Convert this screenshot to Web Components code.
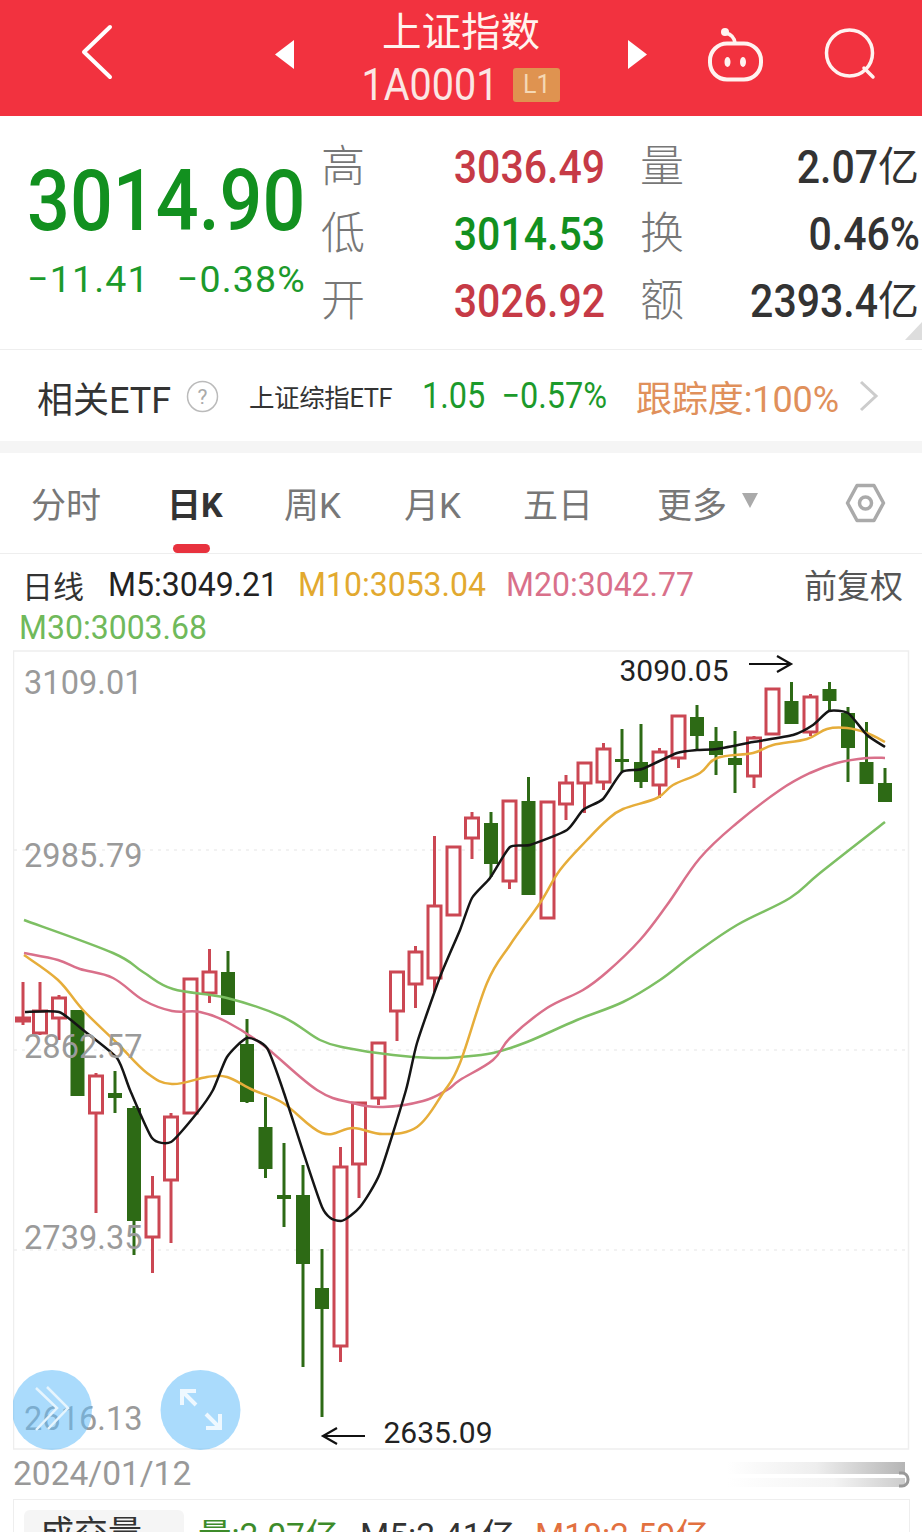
<!DOCTYPE html>
<html lang="zh"><head><meta charset="utf-8"><title>上证指数</title>
<style>
html,body{margin:0;padding:0;background:#fff}
body{width:922px;height:1532px;overflow:hidden;font-family:Roboto,"Noto Sans CJK SC",sans-serif;color:#333}
</style></head><body>
<app-header></app-header>
<quote-panel></quote-panel>
<etf-row></etf-row>
<section-gap></section-gap>
<period-tabs>
  <tab-item>分时</tab-item><tab-item active>日K</tab-item><tab-item>周K</tab-item><tab-item>月K</tab-item><tab-item>五日</tab-item><tab-item caret>更多</tab-item>
</period-tabs>
<ma-legend></ma-legend>
<kline-chart></kline-chart>
<date-row>2024/01/12</date-row>
<volume-row></volume-row>
<script>
const FONT='Roboto,"Noto Sans CJK SC",sans-serif';
function def(name,html,init){
  customElements.define(name,class extends HTMLElement{
    constructor(){super();const r=this.attachShadow({mode:'open'});r.innerHTML=html;if(init)init(r,this);}
  });
}
def('app-header',`<style>
:host{display:flex;position:relative;height:116px;background:#f2323f;color:#fff;justify-content:center;font-family:${FONT}}
.mid{display:flex;flex-direction:column;align-items:center;padding-top:11px}
.t{font-size:39.5px;line-height:44px;color:#fff3ee}
.code{display:flex;align-items:center;gap:15px;margin-top:13px;height:34px}
.c{font-size:39.5px;line-height:34px;display:inline-block;transform:scaleY(1.12);color:#fbe6e4}
.b{width:47px;height:34px;background:#df9350;border-radius:3px;color:#f5d8b4;font-size:25px;line-height:34px;text-align:center}
svg.a{position:absolute;left:0;top:0}
</style>
<svg class="a" width="922" height="116" viewBox="0 0 922 116" fill="none" stroke="#fff">
<path d="M110 27 84 52 110 77" stroke-width="4" stroke-linecap="round" stroke-linejoin="round"/>
<path d="M294 40 275 54.500 294 69Z" fill="#fff" stroke="none"/>
<path d="M628 40 647 54.500 628 69Z" fill="#fff" stroke="none"/>
<rect x="710" y="43.500" width="51" height="36" rx="17" stroke="#fff3f0" stroke-width="4"/>
<path d="M726 33q8 2 9 10" stroke="#fff3f0" stroke-width="3.500"/>
<circle cx="725" cy="32" r="4" fill="#fff3f0" stroke="none"/>
<ellipse cx="727.500" cy="62" rx="3" ry="5" fill="#fff3f0" stroke="none"/><ellipse cx="743" cy="62" rx="3" ry="5" fill="#fff3f0" stroke="none"/>
<circle cx="849.500" cy="53" r="23" stroke="#fff3f0" stroke-width="3.500"/>
<path d="M864 68 873 77" stroke="#fff3f0" stroke-width="3.500" stroke-linecap="round"/>
</svg>
<div class="mid"><div class="t">上证指数</div><div class="code"><span class="c">1A0001</span><span class="b">L1</span></div></div>`);

const stat=(l,v,c,u)=>`<div class="l">${l}</div><div class="v" style="color:${c}"><span class="n">${v}</span>${u?`<span class="u">${u}</span>`:''}</div>`;
def('quote-panel',`<style>
:host{display:grid;position:relative;grid-template-columns:321px 1fr;height:233px;font-family:${FONT};overflow:hidden}
.left{padding:44px 0 0 27px}
.p{font-size:75.500px;line-height:80px;font-weight:500;color:#12901f;display:block;transform:scaleY(1.14);transform-origin:left center;white-space:nowrap}
.d{display:flex;margin-top:19px;width:279px;justify-content:space-between;font-size:37.500px;line-height:40px;color:#1c9a2b;letter-spacing:1.200px;margin-left:0}
.g{display:grid;grid-template-columns:44px 240px 35px 44px 236px;grid-auto-rows:67px;padding-top:18px}
.l{font-size:44px;line-height:67px;color:#777;font-weight:300}
.v{text-align:right;font-size:41px;line-height:67px;font-weight:500;white-space:nowrap}
.n{display:inline-block;transform:scaleY(1.12)}
.u{font-weight:400;letter-spacing:1px}
.gap{width:35px}
.c{position:absolute;right:0;bottom:9px;width:0;height:0;border-left:17px solid transparent;border-bottom:18px solid #ddd}
</style>
<div class="left"><span class="p">3014.90</span><div class="d"><span>−11.41</span><span>−0.38%</span></div></div>
<div class="g">
${stat('高','3036.49','#c63a46')}<i class="gap"></i>${stat('量','2.07','#333','亿')}
${stat('低','3014.53','#12901f')}<i class="gap"></i>${stat('换','0.46%','#333')}
${stat('开','3026.92','#c63a46')}<i class="gap"></i>${stat('额','2393.4','#333','亿')}
</div><div class="c"></div>`);

def('etf-row',`<style>
:host{display:grid;grid-template-columns:212px 173px 214px 223px 1fr;align-items:center;box-sizing:border-box;height:92px;padding-left:37px;border-top:1px solid #eee;font-family:${FONT};white-space:nowrap}
.a{font-size:36px;color:#333;display:flex;align-items:center;gap:15px;padding-top:2px}
.b{font-size:25.500px;color:#333;letter-spacing:-.4px;padding-top:0}
.c{font-size:32.500px;color:#1c9a2b;display:flex;gap:16px;transform:scaleY(1.12)}
.o{font-size:36px;color:#e0905b;letter-spacing:-.1px}
svg{display:block}
</style>
<div class="a"><span>相关ETF</span><svg width="33" height="33" viewBox="0 0 33 33" fill="none"><circle cx="16.500" cy="16.500" r="15" stroke="#bbb" stroke-width="1.500"/><text x="16.500" y="24" font-size="21" text-anchor="middle" fill="#aaa" font-family="Roboto">?</text></svg></div>
<div class="b">上证综指ETF</div>
<div class="c"><span>1.05</span><span>−0.57%</span></div>
<div class="o">跟踪度:100%</div>
<svg width="20" height="32" viewBox="0 0 20 32" fill="none"><path d="M2 2 17 16 2 30" stroke="#ccc" stroke-width="3"/></svg>`);

def('section-gap',`<style>:host{display:block;height:12px;background:#f5f5f5}</style>`);

def('period-tabs',`<style>
:host{display:grid;position:relative;grid-template-columns:136px 117px 120px 119px 134px 186px 40px;align-items:center;box-sizing:border-box;height:101px;padding:0 0 0 31px;border-bottom:1px solid #eee;font-family:${FONT}}
svg{display:block;margin:0 0 0 2px}
</style><slot></slot>
<svg width="41" height="40" viewBox="0 0 41 40" fill="none"><path d="M12 2.500H29L38.500 20 29 37.500H12L2.500 20Z" stroke="#aaa" stroke-width="3.500" stroke-linejoin="round"/><circle cx="20.500" cy="20" r="6" stroke="#aaa" stroke-width="3.500"/></svg>`);

customElements.define('tab-item',class extends HTMLElement{
  constructor(){super();const r=this.attachShadow({mode:'open'});
    r.innerHTML=`<style>
    :host{display:flex;align-items:center;height:98px;margin-bottom:2px;font-size:35px;color:#777;position:relative;white-space:nowrap}
    :host([active]){color:#333;font-weight:700;font-size:34px}
    .bar{position:absolute;left:6px;bottom:-2px;width:37px;height:9px;border-radius:5px;background:#e8323e}
    .caret{margin-left:15px;width:0;height:0;border-left:8.500px solid transparent;border-right:8.500px solid transparent;border-top:15px solid #aaa;margin-top:-4px}
    </style><slot></slot>${this.hasAttribute('active')?'<i class="bar"></i>':''}${this.hasAttribute('caret')?'<i class="caret"></i>':''}`;
  }
});

def('ma-legend',`<style>
:host{display:block;box-sizing:border-box;height:96px;padding-top:9px;font-family:${FONT};white-space:nowrap}
.r{display:flex;align-items:center;height:42px;font-size:32px}
.r1{padding-left:22px}
.r2{padding-left:19px;height:43px}
.m{display:inline-block;transform:scaleY(1.06)}
.x{margin-left:auto;margin-right:19px;font-size:33px;color:#555}
</style>
<div class="r r1"><span style="color:#333;font-size:31px;width:86px">日线</span><span class="m" style="color:#222;width:190px">M5:3049.21</span><span class="m" style="color:#e2a92f;width:208px">M10:3053.04</span><span class="m" style="color:#d9708a">M20:3042.77</span><span class="x">前复权</span></div>
<div class="r r2"><span class="m" style="color:#70b95b">M30:3003.68</span></div>`);

const candles=[
[23,'r',982,1025,1018,1021],[40,'r',982,1035,1011,1033],[59,'r',995,1040,998,1018],[77.500,'g',1010,1096,1010,1096],
[96,'r',1073,1213,1076,1113],[115,'g',1071,1113,1093,1098],[134,'g',1106,1255,1108,1221],[152.500,'r',1176,1273,1197,1237],
[171,'r',1113,1243,1117,1180],[190.500,'r',979,1113,979,1113],[209.500,'r',949,1003,972,993],[228,'g',951,1015,972,1015],
[247,'g',1019,1103,1044,1102],[265.500,'g',1097,1178,1127,1169],[284,'g',1143,1227,1195,1199],[303,'g',1165,1367,1195,1264],
[322,'g',1249,1417,1288,1309],[340.500,'r',1147,1362,1167,1346],[359,'r',1103,1198,1103,1164],[378.500,'r',1042,1105,1043,1098],
[397,'r',972,1041,972,1011],[415.500,'r',946,1008,952,984],[434.500,'r',836,992,906,978],[453.500,'r',847,915,847,915],
[472,'r',812,859,818,838],[491,'g',812,877,823,864],[509.500,'r',801,889,801,881],[528.500,'g',777,895,801,895],
[547.500,'r',802,918,802,918],[566,'r',775,820,783,804],[584.500,'r',762,813,763,783],[603.500,'r',743,790,749,782],
[622,'g',729,772,759,762],[641,'g',724,788,762,782],[659.500,'r',748,798,752,785],[678.500,'r',716,768,716,758],
[697,'g',705,750,717,736],[716,'g',727,775,741,755],[735,'g',731,793,758,765],[754,'r',736,788,738,776],
[772.500,'r',689,734,689,734],[791.500,'g',682,724,701,724],[810.500,'r',694,736,697,732],[829.500,'g',682,710,689,701],
[848,'g',707,782,713,748],[866.500,'g',722,784,762,784],[885,'g',768,802,783,802]];
const M5=[[25,1012],[59,1012],[83,1030],[117,1058],[130,1090],[152,1138],[171,1142],[197,1113],[213,1090],[227,1057],[247,1038],[267,1048],[283,1090],[322,1207],[341,1221],[360,1207],[380,1173],[406,1090],[417,1043],[440,977],[460,930],[472,898],[490,878],[510,847],[530,845],[567,830],[583,810],[603,799],[622,772],[642,769],[677,753],[697,750],[717,749],[753,742],[793,735],[813,725],[829,711],[848,713],[867,735],[885,747]];
const M10=[[24,955],[58,980],[83,1010],[117,1043],[147,1073],[172,1084],[207,1077],[227,1077],[253,1090],[283,1103],[322,1133],[353,1128],[383,1134],[417,1127],[443,1093],[460,1063],[487,983],[510,945],[540,903],[560,870],[587,840],[607,820],[623,809],[657,798],[673,785],[700,773],[717,758],[753,753],[773,745],[807,739],[827,729],[847,728],[867,733],[885,742]];
const M20=[[24,953],[58,960],[80,969],[113,978],[143,1000],[172,1011],[200,1012],[227,1022],[263,1045],[317,1090],[353,1103],[383,1107],[423,1101],[447,1090],[460,1080],[493,1060],[510,1038],[547,1008],[583,990],[607,972],[640,940],[667,905],[700,858],[737,823],[780,790],[810,773],[837,763],[867,758],[885,758]];
const M30=[[24,920],[113,953],[143,972],[173,989],[227,998],[283,1017],[320,1040],[347,1048],[393,1055],[433,1058],[460,1057],[493,1053],[527,1042],[577,1020],[623,1002],[660,980],[693,955],[737,925],[790,898],[820,873],[885,822]];
function smooth(p,k){let d=`M${p[0][0]} ${p[0][1]}`;for(let i=0;i<p.length-1;i++){const a=p[Math.max(0,i-1)],b=p[i],c=p[i+1],e=p[Math.min(p.length-1,i+2)];
 d+=`C${(b[0]+(c[0]-a[0])*k).toFixed(1)} ${(b[1]+(c[1]-a[1])*k).toFixed(1)} ${(c[0]-(e[0]-b[0])*k).toFixed(1)} ${(c[1]-(e[1]-b[1])*k).toFixed(1)} ${c[0]} ${c[1]}`;}return d;}
function candleSvg(){return candles.map(([x,t,wt,wb,bt,bb])=>{
  const col=t==='r'?'#cb4753':'#2d6a15';
  if(t==='r')return `<path d="M${x} ${wt}V${bt}M${x} ${bb}V${wb}" stroke="${col}" stroke-width="3"/><rect x="${x-6.500}" y="${bt}" width="13" height="${bb-bt}" fill="#fff" fill-opacity="${bb-bt>6?1:0}" stroke="${col}" stroke-width="3"/>`;
  return `<path d="M${x} ${wt}V${wb}" stroke="${col}" stroke-width="3"/><rect x="${x-7}" y="${bt}" width="14" height="${bb-bt}" fill="${col}"/>`;
}).join('');}
def('kline-chart',`<style>
:host{display:block;position:relative;box-sizing:border-box;width:897px;height:800px;margin-left:13px;font-family:${FONT}}
svg{position:absolute;left:0;top:0;display:block}
.y{position:absolute;left:11px;font-size:32.500px;line-height:40px;color:#9a9a9a;letter-spacing:.05px}
.n{position:absolute;font-size:30px;line-height:36px;color:#222}
</style>
<svg width="897" height="800" viewBox="13 650 897 800" fill="none">
<rect x="13.500" y="651" width="895" height="798" stroke="#eee" stroke-width="1.500"/>
<path d="M14 850H908M14 1050H908M14 1250H908" stroke="#eee" stroke-width="1.500" stroke-dasharray="3 5"/>
${candleSvg()}
<path d="${smooth(M30,.18)}" stroke="#7dbf63" stroke-width="2.500"/>
<path d="${smooth(M20,.18)}" stroke="#d9708a" stroke-width="2.500"/>
<path d="${smooth(M10,.18)}" stroke="#e6ad3a" stroke-width="2.500"/>
<path d="${smooth(M5,.1)}" stroke="#151515" stroke-width="2.500"/>
<path d="M749 664H790M777 656 791 664 777 672" stroke="#111" stroke-width="2.200"/>
<path d="M365 1436H324M337 1428 323 1436 337 1444" stroke="#111" stroke-width="2.200"/>
</svg>
<span class="y" style="top:13px">3109.01</span>
<span class="y" style="top:186px">2985.79</span>
<span class="y" style="top:377px">2862.57</span>
<span class="y" style="top:568px">2739.35</span>
<span class="y" style="top:749px">2616.13</span>
<span class="n" style="left:606.500px;top:3px">3090.05</span>
<span class="n" style="left:370.500px;top:765px">2635.09</span>
<svg width="897" height="800" viewBox="13 650 897 800" fill="none">
<circle cx="52" cy="1410" r="40" fill="#64bef9" fill-opacity=".55"/><circle cx="200.500" cy="1410" r="40" fill="#64bef9" fill-opacity=".55"/>
<path d="M36 1388 57 1408 36 1430M47 1387 68 1408 48 1429" stroke="#e6f5fe" stroke-width="2.500"/>
<path d="M182 1405V1391H196M183 1392 196 1405M220 1414V1428H206M219 1427 206 1414" stroke="#eef8ff" stroke-width="4"/>
</svg>`);

def('date-row',`<style>
:host{display:block;position:relative;box-sizing:border-box;height:49px;padding:4px 0 0 13px;font-family:${FONT};font-size:33.500px;line-height:40px;color:#999}
.s1,.s2{position:absolute;right:17px;width:178px}
.s1{top:12px;height:12px;background:linear-gradient(90deg,#fff,#eee 50%,#b5b5b5)}
.s2{top:28px;height:9px;background:linear-gradient(90deg,#fff,#f4f4f4 60%,#ccc)}
svg{position:absolute;left:898px;top:8px}
</style><slot></slot><i class="s1"></i><i class="s2"></i>
<svg width="12" height="30" viewBox="0 0 12 30" fill="none"><path d="M1 15h3a6 6 0 0 1 6 6v1a6 6 0 0 1-6 6H1" stroke="#999" stroke-width="3"/></svg>`);

def('volume-row',`<style>
:host{display:flex;position:relative;box-sizing:border-box;width:897px;margin-left:13px;height:33px;border:solid #eee;border-width:1.500px 1.500px 0;font-family:${FONT};overflow:hidden;white-space:nowrap;font-size:33.500px}
.chip{position:absolute;left:10px;top:10px;width:160px;height:40px;border-radius:6px 6px 0 0;background:#f5f5f5;color:#333;padding:4px 0 0 16px;box-sizing:border-box;line-height:38px;font-size:34px}
.chip i{font-style:normal;color:#bbb;font-size:22px}
.t{position:absolute;top:17px;line-height:38px}
</style>
<div class="chip">成交量 <i>▾</i></div>
<span class="t" style="left:184px;color:#3d8b2a">量:2.07亿</span>
<span class="t" style="left:346px;color:#333">M5:2.41亿</span>
<span class="t" style="left:521px;color:#e2703f">M10:2.59亿</span>`);
</script>
</body></html>
